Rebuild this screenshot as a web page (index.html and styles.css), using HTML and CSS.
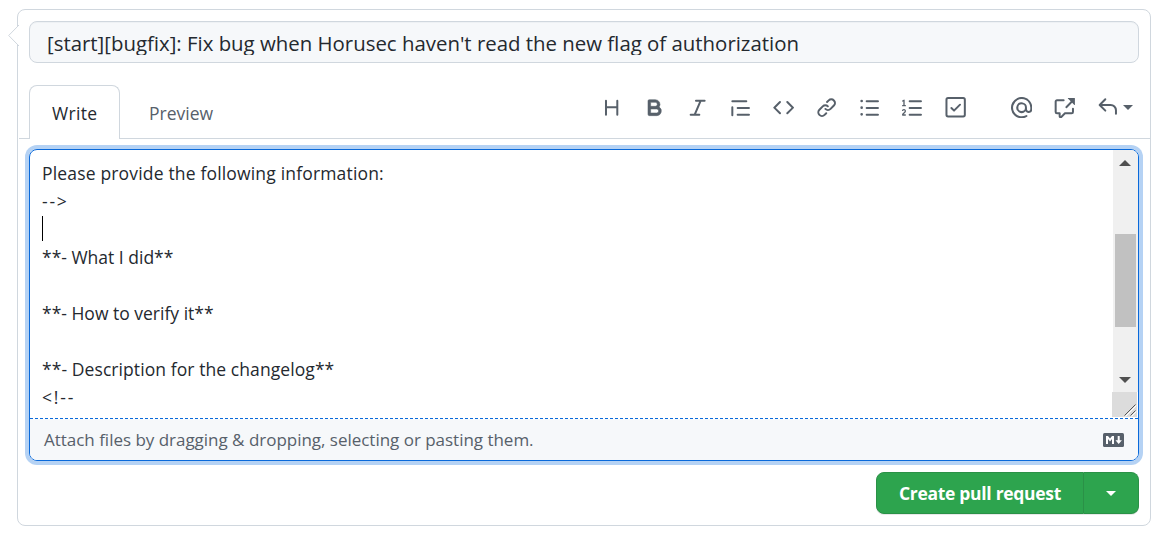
FILE: index.html
```html
<!DOCTYPE html>
<html lang="en">
<head>
<meta charset="utf-8">
<title>Open a pull request</title>
<link rel="stylesheet" href="styles.css">
</head>
<body>
<main class="panel">
  <svg class="pointer" viewBox="0 0 11 22"><path d="M11 0 .7 10.5 11 21" fill="#fff" stroke="#d0d7de"/></svg>
  <div class="title"><span class="title-text">[start][bugfix]: Fix bug when Horusec haven't read the new flag of authorization</span></div>
  <div class="tabs">
    <div class="tab tab-active"><span class="write">Write</span></div>
    <div class="tab"><span class="preview">Preview</span></div>
    <div class="toolbar">
      <svg class="icon" viewBox="0 0 16 16"><path d="M3.75 2a.75.75 0 0 1 .75.75V7h7V2.75a.75.75 0 0 1 1.5 0v10.5a.75.75 0 0 1-1.5 0V8.5h-7v4.75a.75.75 0 0 1-1.5 0V2.75A.75.75 0 0 1 3.75 2Z"/></svg>
      <svg class="icon icon-bold" viewBox="0 0 16 16"><path d="M4 2h4.5a3.501 3.501 0 0 1 2.852 5.53A3.499 3.499 0 0 1 9.5 14H4a1 1 0 0 1-1-1V3a1 1 0 0 1 1-1Zm1 7v3h4.500a1.500 1.500 0 0 0 0-3Zm3.500-2a1.500 1.500 0 0 0 0-3H5v3Z"/></svg>
      <svg class="icon" viewBox="0 0 16 16"><path d="M6 2.750A.75.75 0 0 1 6.750 2h6.500a.75.75 0 0 1 0 1.500h-2.505l-3.858 9H9.250a.75.75 0 0 1 0 1.500h-6.500a.75.75 0 0 1 0-1.500h2.505l3.858-9H6.750A.75.75 0 0 1 6 2.750Z"/></svg>
      <svg class="icon" viewBox="0 0 16 16"><path d="M1.750 2.500h10.500a.75.75 0 0 1 0 1.500H1.750a.75.75 0 0 1 0-1.500Zm4 5h8.500a.75.75 0 0 1 0 1.500h-8.500a.75.75 0 0 1 0-1.500Zm0 5h8.500a.75.75 0 0 1 0 1.500h-8.500a.75.75 0 0 1 0-1.500ZM2.500 7.750v6a.75.75 0 0 1-1.500 0v-6a.75.75 0 0 1 1.500 0Z"/></svg>
      <svg class="icon" viewBox="0 0 16 16"><path d="m11.280 3.220 4.250 4.250a.75.75 0 0 1 0 1.060l-4.250 4.250a.749.749 0 0 1-1.060-1.060L13.940 8l-3.720-3.720a.749.749 0 0 1 1.060-1.060Zm-6.560 0a.751.751 0 0 1 1.060 1.060L2.060 8l3.720 3.720a.749.749 0 0 1-1.060 1.060L.470 8.530a.75.75 0 0 1 0-1.060Z"/></svg>
      <svg class="icon" viewBox="0 0 16 16"><path d="m7.775 3.275 1.250-1.250a3.500 3.500 0 1 1 4.950 4.950l-2.500 2.500a3.500 3.500 0 0 1-4.950 0 .751.751 0 0 1 1.060-1.060 2 2 0 0 0 2.830 0l2.500-2.500a2.002 2.002 0 0 0-2.830-2.830l-1.250 1.250a.751.751 0 0 1-1.060-1.060Zm-4.690 9.640a2 2 0 0 0 2.830 0l1.250-1.250a.751.751 0 0 1 1.060 1.060l-1.250 1.250a3.500 3.500 0 1 1-4.950-4.950l2.500-2.500a3.500 3.500 0 0 1 4.950 0 .751.751 0 0 1-1.060 1.060 2 2 0 0 0-2.830 0l-2.500 2.500a2 2 0 0 0 0 2.830Z"/></svg>
      <svg class="icon" viewBox="0 0 16 16"><path d="M5.750 2.500h8.500a.75.75 0 0 1 0 1.500h-8.500a.75.75 0 0 1 0-1.500Zm0 5h8.500a.75.75 0 0 1 0 1.500h-8.500a.75.75 0 0 1 0-1.500Zm0 5h8.500a.75.75 0 0 1 0 1.500h-8.500a.75.75 0 0 1 0-1.500ZM2 14a1 1 0 1 1 0-2 1 1 0 0 1 0 2Zm1-6a1 1 0 1 1-2 0 1 1 0 0 1 2 0ZM2 4a1 1 0 1 1 0-2 1 1 0 0 1 0 2Z"/></svg>
      <svg class="icon" viewBox="0 0 16 16"><path d="M5 3.250a.75.75 0 0 1 .75-.75h8.500a.75.75 0 0 1 0 1.500h-8.500A.75.75 0 0 1 5 3.250Zm0 5a.75.75 0 0 1 .75-.75h8.500a.75.75 0 0 1 0 1.500h-8.500A.75.75 0 0 1 5 8.250Zm0 5a.75.75 0 0 1 .75-.75h8.500a.75.75 0 0 1 0 1.500h-8.500a.75.75 0 0 1-.75-.75ZM.924 10.320a.5.5 0 0 1-.851-.525l.001-.001.001-.002.002-.004.007-.011c.097-.144.215-.273.348-.384.228-.190.588-.392 1.068-.392.468 0 .858.181 1.126.484.259.294.377.673.377 1.038 0 .987-.686 1.495-1.156 1.845l-.047.035c-.303.225-.522.400-.654.597h1.357a.5.5 0 0 1 0 1H.5a.5.5 0 0 1-.5-.5c0-1.005.692-1.520 1.167-1.875l.035-.025c.531-.396.800-.625.800-1.078a.570.570 0 0 0-.128-.376C1.806 10.068 1.695 10 1.500 10a.658.658 0 0 0-.429.163.835.835 0 0 0-.144.153ZM2.003 2.500V6h.503a.5.5 0 0 1 0 1H.5a.5.5 0 0 1 0-1h.503V3.308l-.280.140a.5.5 0 0 1-.446-.895l1.003-.500a.5.5 0 0 1 .723.447Z"/></svg>
      <svg class="icon" viewBox="0 0 16 16"><rect x="1.100" y=".8" width="13.800" height="13.800" rx="1.200" fill="none" stroke="#57606a" stroke-width="1.500"/><path d="m11.830 6.280-4.500 4.500a.75.75 0 0 1-1.060 0l-2-2a.75.75 0 0 1 1.060-1.060l1.470 1.470 3.970-3.970a.75.75 0 0 1 1.060 1.060Z"/></svg>
      <svg class="icon mention" viewBox="0 0 16 16"><path d="M4.750 2.370a6.501 6.501 0 0 0 6.500 11.260.75.75 0 0 1 .75 1.298A7.999 7.999 0 0 1 .989 4.148 8 8 0 0 1 16 7.750v1.500a2.750 2.750 0 0 1-5.072 1.475 3.999 3.999 0 0 1-6.650-4.190A4 4 0 0 1 12 8v1.250a1.250 1.250 0 0 0 2.500 0V7.867a6.500 6.500 0 0 0-9.750-5.496ZM10.500 8a2.500 2.500 0 1 0-5 0 2.500 2.500 0 0 0 5 0Z"/></svg>
      <svg class="icon" viewBox="0 0 16 16"><path d="M2.250 3.100a.250.250 0 0 0-.250.250v7.900c0 .138.112.250.250.250h2a.75.75 0 0 1 .75.75v2.190l2.720-2.720a.750.750 0 0 1 .530-.220h5a.250.250 0 0 0 .250-.250v-2.500a.75.75 0 0 1 1.500 0v2.500A1.750 1.750 0 0 1 13.250 13H8.560l-2.573 2.573A1.458 1.458 0 0 1 3.500 14.543V13H2.250A1.750 1.750 0 0 1 .5 11.250v-7.900C.5 2.384 1.284 1.600 2.250 1.600h5a.75.75 0 0 1 0 1.500Z"/><path d="M10.600 .7h4.850a.250.250 0 0 1 .250.250V5.800a.250.250 0 0 1-.427.177L13.630 4.330 9.780 8.180a.751.751 0 0 1-1.060-1.060l3.850-3.850-2.143-2.143A.250.250 0 0 1 10.600 .7Z"/></svg>
      <span class="reply">
        <svg class="icon" viewBox="0 0 16 16"><path d="M6.780 1.970a.75.75 0 0 1 0 1.060L3.810 6h6.440A4.750 4.750 0 0 1 15 10.750v2.500a.75.75 0 0 1-1.500 0v-2.500a3.250 3.250 0 0 0-3.250-3.250H3.810l2.970 2.970a.749.749 0 0 1-1.060 1.060L1.470 7.280a.75.75 0 0 1 0-1.060l4.250-4.250a.75.75 0 0 1 1.060 0Z"/></svg>
        <i class="caret"></i>
      </span>
    </div>
  </div>
  <section class="editor">
    <div class="write-area">
      <div class="lines">
        <div class="line"><span class="intro">Please provide the following information:</span></div>
        <div class="line"><span class="marker">--&gt;</span></div>
        <div class="line"><i class="text-cursor"></i></div>
        <div class="line"><span>**- What I did**</span></div>
        <div class="line"></div>
        <div class="line"><span>**- How to verify it**</span></div>
        <div class="line"></div>
        <div class="line"><span class="changelog">**- Description for the changelog**</span></div>
        <div class="line"><span class="marker">&lt;!--</span></div>
      </div>
      <div class="scroll">
        <div class="track">
          <svg class="arrow" viewBox="0 0 12 6"><path d="M0 6 6 0l6 6z"/></svg>
          <div class="thumb"></div>
          <svg class="arrow" viewBox="0 0 12 6"><path d="M0 0h12L6 6z"/></svg>
        </div>
        <svg class="grip" viewBox="0 0 25 25"><path d="M12.500 23.500l11-11M18.500 23.500l5-5" stroke="#555"/><path d="M13.500 24.500l11-11M19.500 24.500l5-5" stroke="#fff"/></svg>
      </div>
    </div>
    <svg class="dashes" viewBox="0 0 1108 1" preserveAspectRatio="none"><path d="M0 .5h1108" stroke="#0969da" stroke-dasharray="3 2"/></svg>
    <div class="attach">
      <span class="hint">Attach files by dragging &amp; dropping, selecting or pasting them.</span>
      <svg class="markdown" viewBox="0 0 21 14"><rect width="21" height="14" rx="1.500" fill="#57606a"/><path d="M3 11V3h2l2 2.600L9 3h2v8H9V6L7 8.500 5 6v5zM14.700 3h2v4.200h2.200l-3.200 3.900-3.200-3.900h2.200z" fill="#fff"/></svg>
    </div>
  </section>
  <div class="actions">
    <div class="create"><span class="create-text">Create pull request</span></div>
    <div class="more"><i class="caret caret-light"></i></div>
  </div>
</main>
</body>
</html>
```
FILE: styles.css
```css
* { box-sizing: border-box; }
body {
  margin: 0;
  padding: 9px 14px 0 17px;
  background: #fff;
  color: #24292f;
  font: 17.5px/28px "Open Sans", "Noto Sans", sans-serif;
}
span { white-space: nowrap; }
svg { display: block; flex: none; }
.panel {
  position: relative;
  height: 517px;
  padding: 11px 11px 0;
  border: 1px solid #d0d7de;
  border-radius: 8px;
}
.pointer { position: absolute; left: -10px; top: 15px; width: 11px; height: 22px; }
.title {
  height: 42px;
  padding: 6px 18px 0;
  border: 1px solid #d0d7de;
  border-radius: 8px;
  background: #f6f8fa;
  box-shadow: inset 0 1px 0 rgba(208, 215, 222, .2);
}
.title-text {
  display: block;
  height: 27px;
  margin-left: -1px;
  overflow: hidden;
  font-size: 20.4px;
  line-height: 31px;
}
.tabs {
  display: flex;
  height: 54px;
  margin: 22px -11px 0 -10px;
  padding-left: 10px;
  border-bottom: 1px solid #d0d7de;
}
.tab { height: 54px; padding: 14px 22px 0 29px; color: #57606a; }
.tab-active {
  width: 91px;
  padding: 13px 0 0 22px;
  border: 1px solid #d0d7de;
  border-bottom: 0;
  border-radius: 8px 8px 0 0;
  background: #fff;
  color: #24292f;
}
.write { letter-spacing: .3px; }
.toolbar { display: flex; gap: 21.8px; height: 21px; margin: 11.5px 17px 0 auto; }
.icon { width: 21.3px; height: 21.3px; fill: #57606a; }
.icon-bold { stroke: #57606a; stroke-width: .4; }
.mention { margin-left: 22px; }
.reply { display: flex; align-items: center; gap: 5px; }
.caret { border: 5.5px solid transparent; border-top-color: #57606a; border-bottom: 0; }
.caret-light { border-top-color: #fff; }
.editor {
  height: 312px;
  margin-top: 10px;
  border: 1px solid #0969da;
  border-radius: 8px;
  box-shadow: 0 0 0 4px rgba(9, 105, 218, .3);
  overflow: hidden;
}
.write-area { display: flex; justify-content: space-between; height: 268px; }
.lines { padding: 9px 0 0 12px; }
.line { height: 28px; }
.intro { letter-spacing: .17px; }
.changelog { letter-spacing: .08px; }
.marker { letter-spacing: 1.8px; }
.text-cursor { display: block; width: 1px; height: 26px; border-top: 1px solid #fff; background: #000; }
.scroll { width: 26px; padding-right: 1px; }
.track {
  display: flex;
  flex-direction: column;
  justify-content: space-between;
  align-items: center;
  height: 242px;
  margin: 0 -1px 0 1px;
  padding: 10px 3px 9px 2px;
  background: #f0f0f0;
}
.arrow { width: 12px; height: 6px; fill: #505050; }
.thumb { width: 21px; height: 93px; margin: 0 -1px -18px 0; background: #c1c1c1; }
.grip { width: 25px; height: 25px; background: #dcdcdc; }
.dashes { width: 100%; height: 1px; }
.attach {
  display: flex;
  align-items: center;
  justify-content: space-between;
  height: 41px;
  padding: 1px 14px 0;
  background: #f6f8fa;
  color: #57606a;
}
.hint { font-size: 17px; letter-spacing: -.02px; }
.markdown { width: 21px; height: 14px; }
.actions { display: flex; justify-content: flex-end; height: 42px; margin-top: 11px; color: #fff; }
.create, .more {
  display: flex;
  align-items: center;
  justify-content: center;
  border: 1px solid #2a9147;
  background: #2da44e;
  box-shadow: 0 1px 0 rgba(27, 31, 36, .1);
}
.create { width: 208px; border-radius: 8px 0 0 8px; font-weight: 700; }
.create-text { letter-spacing: -.3px; }
.more { width: 55px; border-left: 0; border-radius: 0 8px 8px 0; }
```
